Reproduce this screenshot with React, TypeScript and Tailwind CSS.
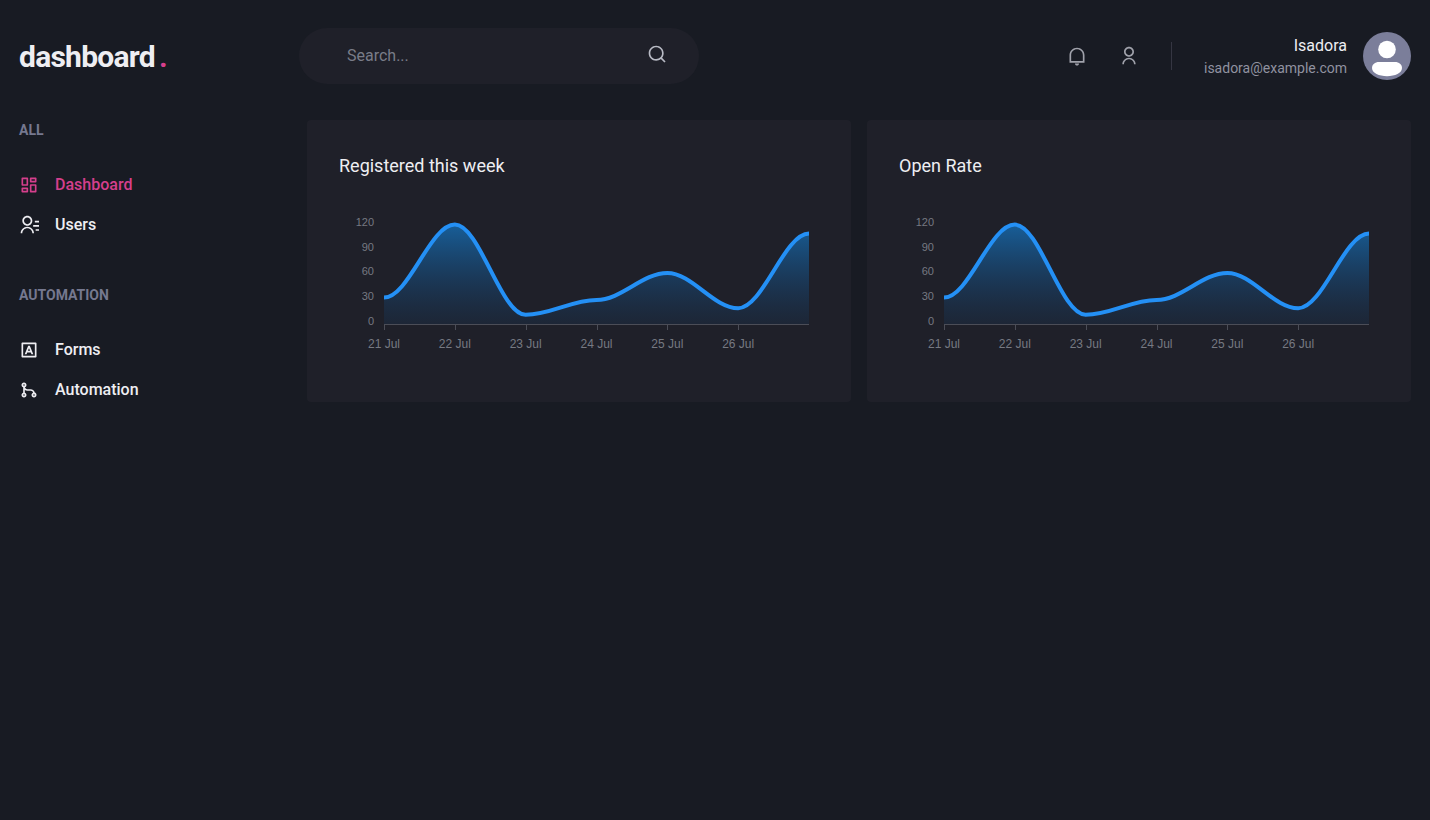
import type { ReactNode } from 'react';
import type { IconType } from 'react-icons';
import {
  RiContactsLine,
  RiDashboardLine,
  RiGitMergeLine,
  RiInputMethodLine,
  RiNotificationLine,
  RiSearchLine,
  RiUserLine,
} from 'react-icons/ri';

const PLOT = { left: 45, right: 470, bottom: 128, axis: 129, step: 0.82 };
const VALUES = [31, 120, 10, 28, 61, 18, 109];
const DAYS = ['21 Jul', '22 Jul', '23 Jul', '24 Jul', '25 Jul', '26 Jul'];
const TICKS = [120, 90, 60, 30, 0];

const GAP = (PLOT.right - PLOT.left) / (VALUES.length - 1);
const px = (i: number) => PLOT.left + i * GAP;
const py = (value: number) => PLOT.bottom - value * PLOT.step;

function smoothLine(values: number[]) {
  const bend = GAP * 0.35;
  return values
    .map((value, i) =>
      i === 0
        ? `M ${px(0)} ${py(value)}`
        : `C ${px(i - 1) + bend} ${py(values[i - 1])} ${px(i) - bend} ${py(value)} ${px(i)} ${py(value)}`,
    )
    .join(' ');
}

function AreaChart({ id, label }: { id: string; label: string }) {
  const line = smoothLine(VALUES);
  return (
    <svg viewBox="0 0 480 160" className="block w-full" role="img" aria-label={label}>
      <defs>
        <linearGradient id={`${id}-fill`} x1="0" y1="0" x2="0" y2="1">
          <stop offset="0" stopColor="#1573be" stopOpacity="0.75" />
          <stop offset="1" stopColor="#153f6b" stopOpacity="0.2" />
        </linearGradient>
        <clipPath id={`${id}-clip`}>
          <rect x={PLOT.left} y="20" width={PLOT.right - PLOT.left} height="112" />
        </clipPath>
      </defs>
      <g clipPath={`url(#${id}-clip)`}>
        <path
          d={`${line} L ${PLOT.right} ${PLOT.axis} L ${PLOT.left} ${PLOT.axis} Z`}
          fill={`url(#${id}-fill)`}
        />
        <path d={line} fill="none" stroke="#2490f5" strokeWidth="4" />
      </g>
      <g stroke="#4b4d57" shapeRendering="crispEdges">
        <line x1={PLOT.left} x2={PLOT.right} y1="129.5" y2="129.5" />
        {DAYS.map((day, i) => (
          <line key={day} x1={px(i) + 0.5} x2={px(i) + 0.5} y1="129" y2="135" />
        ))}
      </g>
      <g className="fill-[#767982] font-['Liberation_Sans',sans-serif]">
        {TICKS.map((tick, i) => (
          <text key={tick} x="35" y={31 + i * 24.7} textAnchor="end" className="text-[11px]">
            {tick}
          </text>
        ))}
        {DAYS.map((day, i) => (
          <text key={day} x={px(i)} y="153" textAnchor="middle" className="text-[12px]">
            {day}
          </text>
        ))}
      </g>
    </svg>
  );
}

function ChartCard({ id, title }: { id: string; title: string }) {
  return (
    <section className="rounded bg-[#1f2029] p-8 pb-[47px]">
      <h2 className="mb-4 text-lg leading-[27px]">{title}</h2>
      <AreaChart id={id} label={title} />
    </section>
  );
}

function NavSection({ title, children }: { title: string; children: ReactNode }) {
  return (
    <div>
      <h2 className="text-sm leading-[21px] font-bold text-[#75788f]">{title}</h2>
      <ul className="mt-8 flex flex-col gap-4">{children}</ul>
    </div>
  );
}

function NavItem({ icon: Icon, label, active = false }: { icon: IconType; label: string; active?: boolean }) {
  return (
    <li>
      <a
        href="#"
        aria-current={active ? 'page' : undefined}
        className={`flex items-center gap-4 text-base leading-6 font-medium ${active ? 'text-[#d53f8c]' : ''}`}
      >
        <Icon className="size-5" />
        {label}
      </a>
    </li>
  );
}

function Avatar() {
  return (
    <svg viewBox="0 0 48 48" className="size-12 shrink-0" role="img" aria-label="Isadora">
      <circle cx="24" cy="24" r="24" fill="#7b7e9a" />
      <circle cx="24" cy="17.5" r="8.8" fill="#fff" />
      <path
        d="M16 30 H32 C36 30 39 32.5 39 36 C39 41 32 44.2 24 44.2 C16 44.2 9 41 9 36 C9 32.5 12 30 16 30 Z"
        fill="#fff"
      />
    </svg>
  );
}

export default function App() {
  return (
    <div className="min-h-screen bg-[#181b23] px-[19px] pt-4 font-[Roboto,sans-serif] text-[#eeeef2]">
      <header className="flex h-20 items-center">
        <a href="#" className="w-64 shrink-0 pt-0.5 text-3xl font-bold tracking-tight">
          dashboard
          <span className="ml-1 text-[#d53f8c]">.</span>
        </a>
        <form
          role="search"
          className="ml-6 flex h-14 w-full max-w-[400px] items-center rounded-full bg-[#1f2029] px-8"
        >
          <input
            type="text"
            aria-label="Search"
            placeholder="Search..."
            className="mr-4 min-w-0 flex-1 bg-transparent px-4 text-base outline-none placeholder:text-[#797c88]"
          />
          <button type="submit" aria-label="Search" className="pb-1 text-[#b8bac4]">
            <RiSearchLine className="size-5" />
          </button>
        </form>
        <div className="ml-auto flex items-center">
          <div className="mr-8 flex items-center gap-8 border-r border-[#353642] py-1 pr-8 text-[#a0a2ab]">
            <button type="button" aria-label="Notifications">
              <RiNotificationLine className="size-5" />
            </button>
            <button type="button" aria-label="Account">
              <RiUserLine className="size-5" />
            </button>
          </div>
          <div className="mr-4 text-right">
            <p className="text-base leading-6">Isadora</p>
            <p className="text-sm leading-[21px] text-[#9092a0]">isadora@example.com</p>
          </div>
          <Avatar />
        </div>
      </header>
      <div className="flex items-start gap-8 py-6">
        <nav aria-label="Main" className="flex w-64 shrink-0 flex-col gap-12">
          <NavSection title="ALL">
            <NavItem icon={RiDashboardLine} label="Dashboard" active />
            <NavItem icon={RiContactsLine} label="Users" />
          </NavSection>
          <NavSection title="AUTOMATION">
            <NavItem icon={RiInputMethodLine} label="Forms" />
            <NavItem icon={RiGitMergeLine} label="Automation" />
          </NavSection>
        </nav>
        <main className="grid min-w-0 flex-1 grid-cols-[repeat(auto-fit,minmax(320px,1fr))] gap-4">
          <ChartCard id="registered" title="Registered this week" />
          <ChartCard id="open-rate" title="Open Rate" />
        </main>
      </div>
    </div>
  );
}
